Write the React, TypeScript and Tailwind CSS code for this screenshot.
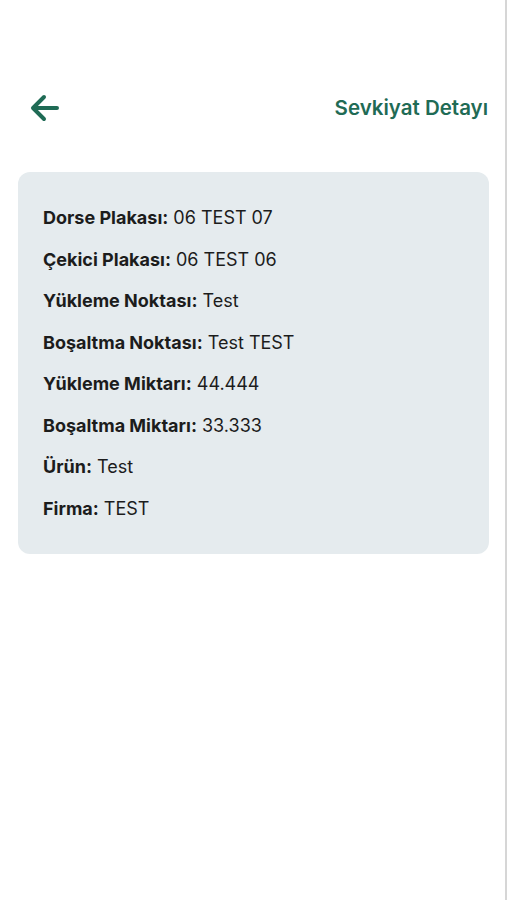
import React from "react";

const rows: [string, string][] = [
  ["Dorse Plakası:", "06 TEST 07"],
  ["Çekici Plakası:", "06 TEST 06"],
  ["Yükleme Noktası:", "Test"],
  ["Boşaltma Noktası:", "Test TEST"],
  ["Yükleme Miktarı:", "44.444"],
  ["Boşaltma Miktarı:", "33.333"],
  ["Ürün:", "Test"],
  ["Firma:", "TEST"],
];

export default function App() {
  return (
    <div
      className="w-[507px] h-[900px] bg-white border-r-2 border-[#d6d6d6] overflow-hidden"
      style={{ fontFamily: "Inter, Roboto, 'Noto Sans', sans-serif" }}
    >
      <div className="flex items-center justify-between pl-[30px] pr-[17px] pt-[94px] h-[122px]">
        <svg width="30" height="28" viewBox="0 0 30 28" fill="none">
          <path
            d="M27 14H4M14 3L3 14L14 25"
            stroke="#1f6b55"
            strokeWidth="4"
            strokeLinecap="round"
            strokeLinejoin="round"
          />
        </svg>
        <div className="text-[20.5px] font-semibold text-[#1f6b55]">Sevkiyat Detayı</div>
      </div>
      <div className="mt-[50px] mx-[18px] w-[471px] rounded-[12px] bg-[#e5ebee] px-[25px] py-[25px]">
        {rows.map(([k, v]) => (
          <div key={k} className="leading-[41.5px] h-[41.5px] text-[18px] text-[#1c1c1c] whitespace-nowrap">
            <span className="font-bold">{k}</span> <span>{v}</span>
          </div>
        ))}
      </div>
    </div>
  );
}
